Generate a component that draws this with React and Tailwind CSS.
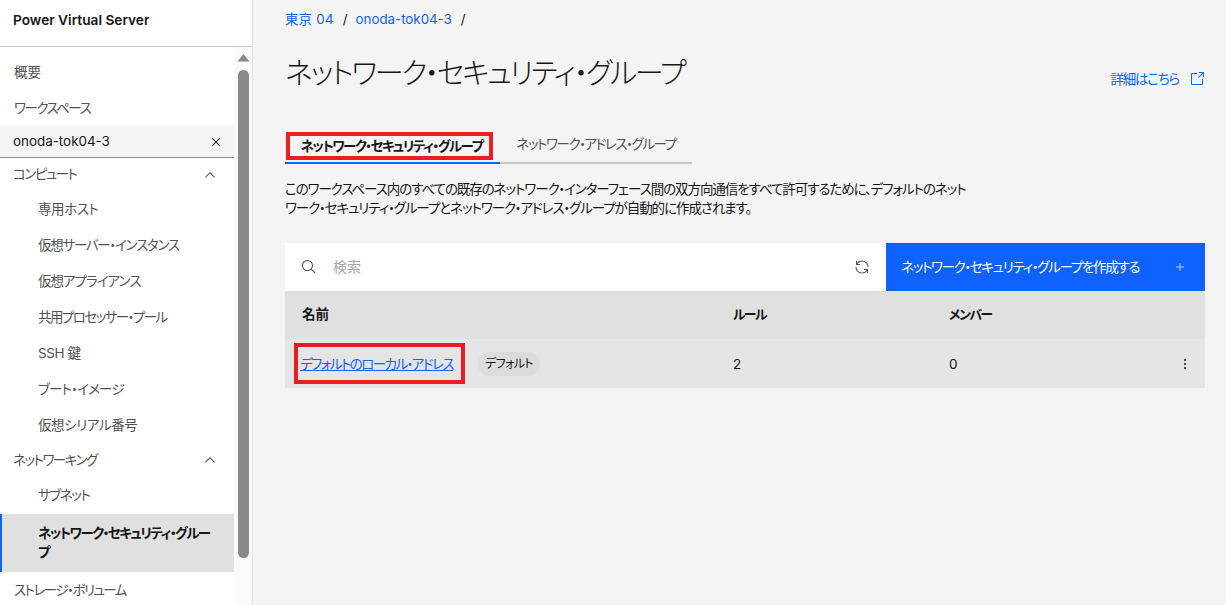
const jp = "[font-family:'Inter','Noto_Sans_CJK_JP',sans-serif] [font-feature-settings:'palt']";
const ja = "text-[13.5px] whitespace-nowrap";

// carbon style glyphs
const Icon = ({ size = 16, className = "", children }) => (
    <svg width={size} height={size} viewBox="0 0 32 32" fill="currentColor" className={`shrink-0 ${className}`}>
        {children}
    </svg>
);

const ChevronUp = () => (
    <Icon className="text-[#525252]"><path d="M16 10 26 20 24.6 21.4 16 12.8 7.4 21.4 6 20z" /></Icon>
);

const SideItem = ({ label, sub, h = "h-9", t = "tracking-[-1.5px]" }) => (
    <div className={`${h} ${t} flex items-center text-[#525252] ${ja} ${sub ? "pl-[38px]" : "pl-[14px]"}`}>{label}</div>
);

const SideGroup = ({ label, h }) => (
    <div className={`${h} flex items-center justify-between pl-[13px] pr-4 text-[#525252] tracking-[-1.5px] ${ja}`}>
        <span>{label}</span>
        <ChevronUp />
    </div>
);

const Sidebar = () => (
    <aside className="w-[253px] shrink-0 h-[605px] bg-white border-r border-[#e0e0e0] flex flex-col overflow-hidden">
        <div className="h-[47px] shrink-0 border-b border-[#c6c6c6] pl-[13px] pt-[10px] text-[13.7px] font-semibold text-[#161616]">
            Power Virtual Server
        </div>
        <div className="flex flex-1 min-h-0">
            <nav className="w-[234px] shrink-0 pt-[7px]">
                <SideItem label="概要" t="tracking-normal" />
                <SideItem label="ワークスペース" />
                <div className="h-8 flex items-center justify-between pl-[13px] pr-[10px] bg-[#f4f4f4] border-b border-[#8d8d8d] text-[13.4px] text-[#161616]">
                    <span>onoda-tok04-3</span>
                    <Icon><path d="M24 9.4 22.6 8 16 14.6 9.4 8 8 9.4l6.6 6.6L8 22.6 9.4 24l6.6-6.6 6.6 6.6 1.4-1.4-6.6-6.6L24 9.4z" /></Icon>
                </div>
                <SideGroup h="h-[33px]" label="コンピュート" />
                <SideItem sub label="専用ホスト" t="tracking-[-0.4px]" />
                <SideItem sub label="仮想サーバー・インスタンス" t="tracking-[-1.25px]" />
                <SideItem sub label="仮想アプライアンス" t="tracking-[-1px]" />
                <SideItem sub label="共用プロセッサー・プール" t="tracking-[-1.55px]" />
                <SideItem sub label="SSH 鍵" t="tracking-[-0.4px]" />
                <SideItem sub label="ブート・イメージ" t="tracking-[-0.8px]" />
                <SideItem sub label="仮想シリアル番号" t="tracking-[-0.4px]" />
                <SideGroup h="h-[34px]" label="ネットワーキング" />
                <SideItem sub h="h-[37px]" label="サブネット" t="tracking-[-1.4px]" />
                <div className="h-[58px] flex flex-col justify-center bg-[#e0e0e0] border-l-2 border-[#0f62fe] pl-[36px] text-[13.5px] tracking-[-1.5px] leading-[19px] font-bold text-[#161616]">
                    <span>ネットワーク・セキュリティ・グルー</span>
                    <span>プ</span>
                </div>
                <SideItem label="ストレージ・ボリューム" />
            </nav>
            <div className="flex-1 bg-[#fafafa] flex flex-col items-center">
                <svg width="13" height="9" viewBox="0 0 13 9" className="mt-[6px] fill-[#8a8a8a]">
                    <path d="M6.5 1 L12.5 8.5 L0.5 8.5 Z" />
                </svg>
                <div className="w-[11px] h-[488px] mt-[8px] rounded-full bg-[#8a8a8a]" />
            </div>
        </div>
    </aside>
);

const App = () => (
    <div className={`h-[605px] w-[1226px] flex overflow-hidden bg-[#f4f4f4] ${jp}`}>
        <Sidebar />
        <main className="flex-1 pl-8 pr-[21px] min-w-0">
            <div className="h-[40px] flex items-center text-[13.3px] text-[#0f62fe]">
                <span className="tracking-[0.3px]">東京 04</span>
                <span className="ml-[9px] mr-[8px] text-[#161616]">/</span>
                <span>onoda-tok04-3</span>
                <span className="mx-[9px] text-[#161616]">/</span>
            </div>
            <div className="h-[72px] flex justify-between">
                <h1 className="mt-[11px] text-[29px] tracking-[-2.2px] leading-[46px] font-light text-[#161616] whitespace-nowrap">ネットワーク・セキュリティ・グループ</h1>
                <a className={`mt-[29px] h-5 flex items-center gap-[10px] text-[#0f62fe] tracking-[-1.2px] ${ja}`}>
                    詳細はこちら
                    <Icon><path d="M26 28H6a2.003 2.003 0 0 1-2-2V6a2.003 2.003 0 0 1 2-2h10v2H6v20h20V16h2v10a2.003 2.003 0 0 1-2 2z" /><path d="M20 2v2h6.586L18 12.586 19.414 14 28 5.414V12h2V2H20z" /></Icon>
                </a>
            </div>
            <div className="mt-[8px] flex h-[44px] w-[407px]">
                <div className="w-[215px] h-[44px] border-b-2 border-[#0f62fe] pt-[12px]">
                    <div className={`w-[207px] h-[28px] ml-px border-4 border-[#ed1c24] flex items-center justify-center font-bold text-[#161616] tracking-[-1.5px] ${ja}`}>
                        <span className="pl-1">ネットワーク・セキュリティ・グループ</span>
                    </div>
                </div>
                <div className={`w-[192px] h-[44px] border-b-2 border-[#c6c6c6] pt-[10px] flex justify-center leading-[28px] text-[#525252] tracking-[-1.4px] ${ja}`}>
                    ネットワーク・アドレス・グループ
                </div>
            </div>
            <p className="mt-[16px] w-[685px] text-[13.5px] tracking-[-1.07px] leading-[19px] text-[#161616]">
                このワークスペース内のすべての既存のネットワーク・インターフェース間の双方向通信をすべて許可するために、デフォルトのネットワーク・セキュリティ・グループとネットワーク・アドレス・グループが自動的に作成されます。
            </p>
            <div className="mt-[25px] h-12 flex bg-white">
                <div className="flex-1 flex items-center pl-4">
                    <Icon className="text-[#525252]"><path d="M29 27.5859l-7.5521-7.5521a11.0177 11.0177 0 1 0-1.4141 1.4141L27.5859 29ZM4 13a9 9 0 1 1 9 9A9.01 9.01 0 0 1 4 13Z" /></Icon>
                    <span className="ml-4 text-sm text-[#a8a8a8]">検索</span>
                </div>
                <div className="w-12 flex items-center justify-center text-[#525252]">
                    <Icon><path d="M12 10H6.78A11 11 0 0 1 27 16h2A13 13 0 0 0 6 7.68V4H4v8h8zM20 22h5.22A11 11 0 0 1 5 16H3a13 13 0 0 0 23 8.32V28h2v-8h-8z" /></Icon>
                </div>
                <div className={`w-[319px] bg-[#0f62fe] flex items-center justify-between pl-[15px] pr-[17px] text-white tracking-[-1.3px] ${ja}`}>
                    <span>ネットワーク・セキュリティ・グループを作成する</span>
                    <Icon className="opacity-70"><path d="M17 15V8h-2v7H8v2h7v7h2v-7h7v-2z" /></Icon>
                </div>
            </div>
            <div className={`h-12 pb-px grid grid-cols-[448px_216px_1fr] items-center bg-[#e0e0e0] font-semibold text-[#161616] ${ja}`}>
                <div className="pl-[17px]">名前</div>
                <div className="text-[13px] tracking-[-1.6px]">ルール</div>
                <div className="text-[13px] tracking-[-1.6px]">メンバー</div>
            </div>
            <div className={`h-[49px] grid grid-cols-[448px_216px_1fr_auto] items-center bg-[#e5e5e5] text-[#161616] ${ja}`}>
                <div className="flex items-center pl-[9px]">
                    <div className="w-[171px] h-[41px] border-4 border-[#ed1c24] flex items-center justify-center pr-[6px] pt-px">
                        <a className="text-[#0f62fe] underline tracking-[-1.55px]">デフォルトのローカル・アドレス</a>
                    </div>
                    <span className="ml-[13px] h-6 w-[62px] rounded-full bg-[#dcdcdc] flex items-center justify-center text-xs tracking-[-0.7px]">デフォルト</span>
                </div>
                <div className="pt-px">2</div>
                <div className="pt-px">0</div>
                <Icon className="mr-[12px]"><circle cx="16" cy="8" r="2" /><circle cx="16" cy="16" r="2" /><circle cx="16" cy="24" r="2" /></Icon>
            </div>
        </main>
    </div>
);

export default App;
